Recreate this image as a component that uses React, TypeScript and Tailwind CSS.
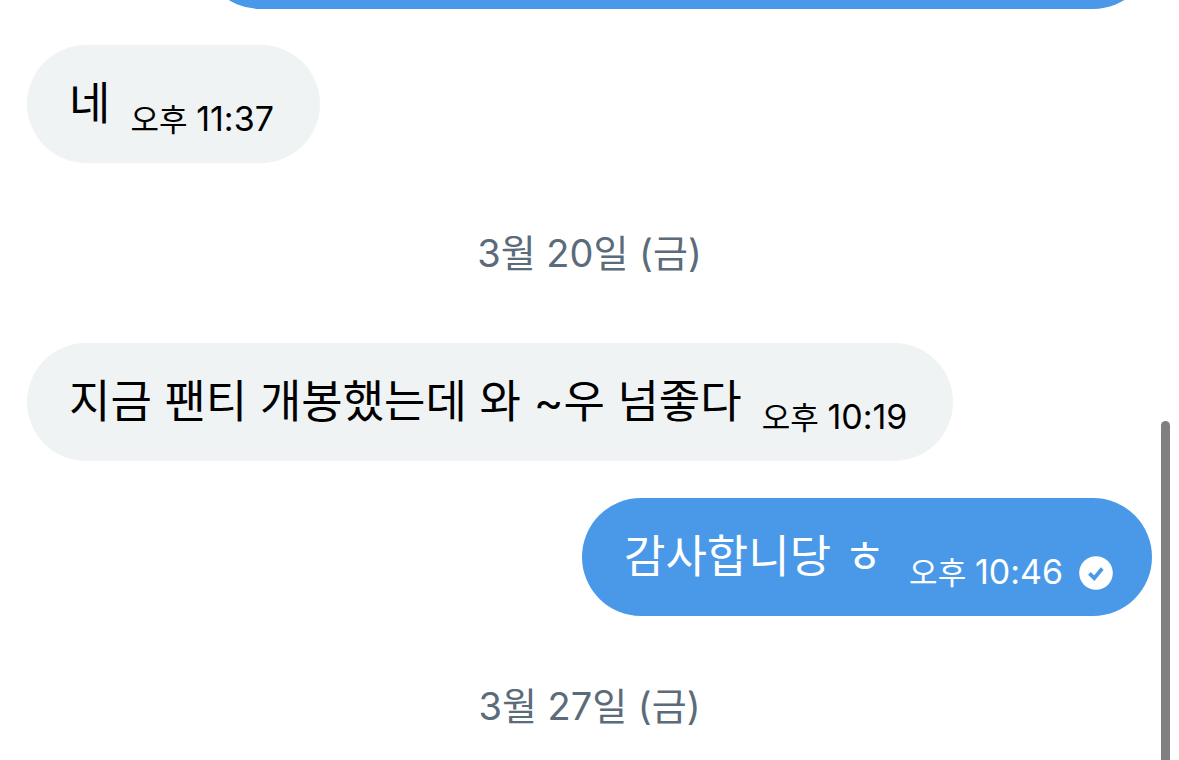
import clsx from 'clsx';

type Message = {
  id: number;
  type: 'message';
  text: string;
  period: string;
  clock: string;
  mine?: boolean;
};

type DateLabel = {
  id: number;
  type: 'date';
  text: string;
};

const items: (Message | DateLabel)[] = [
  { id: 1, type: 'message', text: '네', period: '오후', clock: '11:37' },
  { id: 2, type: 'date', text: '3월 20일 (금)' },
  { id: 3, type: 'message', text: '지금 팬티 개봉했는데 와 ~우 넘좋다', period: '오후', clock: '10:19' },
  { id: 4, type: 'message', text: '감사합니당 ㅎ', period: '오후', clock: '10:46', mine: true },
  { id: 5, type: 'date', text: '3월 27일 (금)' },
];

function SentIcon() {
  return (
    <svg viewBox="0 0 34 34" className="size-[34px] shrink-0" role="img" aria-label="전송됨">
      <circle cx="17" cy="17" r="16.8" fill="#ffffff" />
      <path d="M10.4 17.4l4.9 4.7 7.9-9.6" fill="none" stroke="#4a99e9" strokeWidth="3.8" />
    </svg>
  );
}

function Bubble({ message }: { message: Message }) {
  return (
    <div
      className={clsx(
        'flex items-end rounded-[59px] pt-8 pb-6 pl-[42px]',
        message.mine ? 'self-end bg-[#4a99e9] pr-[39px] text-white' : 'self-start bg-[#eff3f4] pr-[46px] text-black'
      )}
    >
      <p className="pb-2 text-[45px] leading-[54px]">{message.text}</p>
      <div className={clsx('flex items-center gap-4', message.mine ? 'ml-6' : 'ml-5')}>
        <time className="text-[31px] leading-[38px]">
          {message.period} <span className="text-[34px]">{message.clock}</span>
        </time>
        {message.mine && <SentIcon />}
      </div>
    </div>
  );
}

export default function App() {
  return (
    <div className="relative h-screen overflow-hidden bg-white font-['Inter','Noto_Sans_CJK_KR',sans-serif]">
      <main className="flex flex-col px-[27px]">
        {/* end of the previous message, scrolled past the top edge */}
        <div className="mb-9 ml-[174px] h-[9px] overflow-hidden">
          <div className="-mt-[109px] h-[118px] rounded-[59px] bg-[#4a99e9]" />
        </div>

        {items.map((item, index) => {
          if (item.type === 'date') {
            return (
              <div key={item.id} className="py-[66px] text-center text-[38px] leading-[48px] text-[#5b6b7a]">
                {item.text}
              </div>
            );
          }
          const followsMessage = index > 0 && items[index - 1].type === 'message';
          return (
            <div key={item.id} className={clsx('flex flex-col', followsMessage && 'mt-[37px]')}>
              <Bubble message={item} />
            </div>
          );
        })}
      </main>

      {/* scrollbar thumb */}
      <div className="absolute top-[421px] right-[9px] -bottom-2 w-[9px] rounded-full bg-[#808080]" />
    </div>
  );
}
